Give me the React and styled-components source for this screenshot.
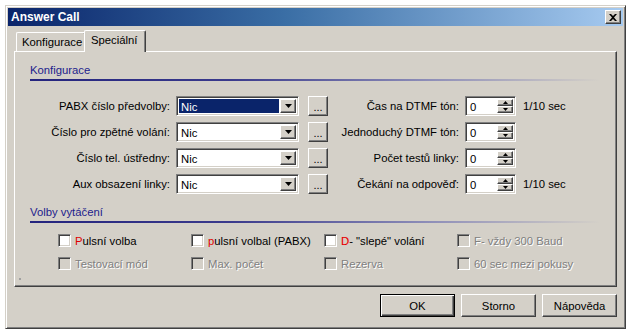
import React from "react";
import styled, { createGlobalStyle, css } from "styled-components";

const GlobalStyle = createGlobalStyle`
  body {
    margin: 0;
    background: #ffffff;
    font-family: "Liberation Sans", Arial, sans-serif;
    font-size: 11.3px;
    color: #000;
  }
`;

const sunken = css`
  border: 1px solid;
  border-color: #808080 #ffffff #ffffff #808080;
  box-shadow: inset 1px 1px #404040, inset -1px -1px #d4d0c8;
`;

const raised = css`
  border: 1px solid;
  border-color: #ffffff #404040 #404040 #ffffff;
  box-shadow: inset -1px -1px #808080, inset 1px 1px #d4d0c8;
`;

const Page = styled.div`
  padding: 5px 0 0 5px;
`;

const Window = styled.div`
  box-sizing: border-box;
  width: 621px;
  height: 324px;
  background: #d4d0c8;
  border: 1px solid;
  border-color: #d4d0c8 #404040 #404040 #d4d0c8;
  box-shadow: inset 1px 1px #ffffff, inset -1px -1px #808080;
  padding: 2px 2px 0 2px;
  display: flex;
  flex-direction: column;
`;

const TitleBar = styled.div`
  height: 18px;
  display: flex;
  align-items: center;
  justify-content: space-between;
  background: linear-gradient(to right, #0a246a 0%, #3a6ea5 45%, #a6caf0 100%);
  padding: 0 2px 0 3px;
`;

const Title = styled.span`
  color: #fff;
  font-weight: bold;
  font-size: 12px;
`;

const CloseButton = styled.div`
  ${raised};
  box-sizing: border-box;
  width: 16px;
  height: 14px;
  background: #d4d0c8;
  display: flex;
  align-items: center;
  justify-content: center;
`;

const Body = styled.div`
  flex: 1;
  padding: 4px 6px 0 6px;
  display: flex;
  flex-direction: column;
`;

const TabRow = styled.div`
  display: flex;
  align-items: flex-end;
  height: 21px;
  padding-left: 2px;
  position: relative;
  z-index: 1;
`;

const Tab = styled.div`
  box-sizing: border-box;
  height: ${(p) => (p.$active ? "22px" : "19px")};
  width: ${(p) => p.$w}px;
  margin-left: ${(p) => (p.$active ? "-2px" : "0")};
  padding: ${(p) => (p.$active ? "3px 0 0 6px" : "3px 0 0 5px")};
  background: #d4d0c8;
  border-top: 1px solid #ffffff;
  border-left: 1px solid #ffffff;
  border-right: 1px solid #404040;
  box-shadow: inset -1px 0 #808080;
  border-radius: 2px 2px 0 0;
  margin-bottom: ${(p) => (p.$active ? "-1px" : "0")};
  white-space: nowrap;
`;

const Panel = styled.div`
  box-sizing: border-box;
  height: 236px;
  border: 1px solid;
  border-color: #ffffff #404040 #404040 #ffffff;
  box-shadow: inset -1px -1px #808080;
  padding: 12px 16px 0 13px;
  position: relative;
`;

const SectionTitle = styled.div`
  color: #1c1c8c;
  line-height: 13px;
  padding-left: 2px;
  margin-top: ${(p) => p.$top}px;

  &::after {
    content: "";
    display: block;
    height: 2px;
    margin-top: 2px;
    width: 570px;
    background: linear-gradient(
      to right,
      #24247e 0%,
      #3a3a8c 35%,
      #8e8eb8 70%,
      rgba(212, 208, 200, 0) 100%
    );
  }
`;

const FieldsGrid = styled.div`
  margin-top: 15px;
  display: grid;
  grid-template-columns: 145px 126px 29px 137px 51px auto;
  row-gap: 6px;
  align-items: center;
`;

const Label = styled.div`
  text-align: right;
  padding-right: ${(p) => p.$pr || 3}px;
  white-space: nowrap;
`;

const Combo = styled.div`
  ${sunken};
  box-sizing: border-box;
  height: 20px;
  background: #fff;
  display: flex;
  align-items: stretch;
  padding: 2px;
  margin-left: 3px;
`;

const ComboText = styled.div`
  flex: 1;
  padding-left: 2px;
  line-height: 16px;
  background: ${(p) => (p.$selected ? "#0a246a" : "transparent")};
  color: ${(p) => (p.$selected ? "#fff" : "#000")};
  margin-right: 1px;
`;

const ArrowButton = styled.div`
  ${raised};
  box-sizing: border-box;
  width: 16px;
  background: #d4d0c8;
  display: flex;
  align-items: center;
  justify-content: center;
`;

const DotsButton = styled.div`
  ${raised};
  box-sizing: border-box;
  width: 20px;
  height: 20px;
  margin-left: 9px;
  background: #d4d0c8;
  font-size: 11px;
  display: flex;
  align-items: flex-end;
  justify-content: center;
  padding-bottom: 3px;
  line-height: 10px;
`;

const Spin = styled.div`
  ${sunken};
  box-sizing: border-box;
  height: 20px;
  background: #fff;
  display: flex;
  padding: 2px;
`;

const SpinText = styled.div`
  flex: 1;
  padding-left: 2px;
  line-height: 16px;
`;

const SpinButtons = styled.div`
  width: 16px;
  display: flex;
  flex-direction: column;
`;

const SpinButton = styled.div`
  ${raised};
  box-sizing: border-box;
  flex: 1;
  background: #d4d0c8;
  display: flex;
  align-items: center;
  justify-content: center;
`;

const Unit = styled.div`
  padding-left: 7px;
  white-space: nowrap;
`;

const CheckGrid = styled.div`
  margin-top: 10px;
  padding-left: 30px;
  display: grid;
  grid-template-columns: repeat(4, 133px);
  row-gap: 8px;
`;

const CheckItem = styled.div`
  display: flex;
  align-items: center;
  height: 15px;
  white-space: nowrap;
  color: ${(p) => (p.$disabled ? "#808080" : "#000")};
  text-shadow: ${(p) => (p.$disabled ? "1px 1px #ffffff" : "none")};
`;

const Box = styled.div`
  ${sunken};
  box-sizing: border-box;
  width: 13px;
  height: 13px;
  margin-right: 4px;
  background: ${(p) => (p.$disabled ? "#d4d0c8" : "#ffffff")};
`;

const Accent = styled.span`
  color: #e00000;
  text-shadow: ${(p) => (p.$soft ? "0 0 1px #ff9090" : "none")};
`;

const Grip = styled.div`
  position: absolute;
  left: 4px;
  bottom: 6px;
  width: 2px;
  height: 2px;
  background: #a0a0a0;
`;

const ButtonRow = styled.div`
  display: flex;
  justify-content: flex-end;
  gap: 6px;
  margin-top: 7px;
`;

const Button = styled.div`
  box-sizing: border-box;
  width: 75px;
  height: 23px;
  background: #d4d0c8;
  display: flex;
  align-items: center;
  justify-content: center;
  ${(p) =>
    p.$default
      ? css`
          border: 1px solid #000;
          box-shadow: inset 1px 1px #ffffff, inset -1px -1px #404040,
            inset -2px -2px #808080;
        `
      : raised}
`;

const DownArrow = () => (
  <svg width="7" height="4" viewBox="0 0 7 4">
    <path d="M0 0h7L3.5 4z" fill="#000" />
  </svg>
);

const TinyArrow = ({ up }) => (
  <svg width="5" height="3" viewBox="0 0 5 3">
    <path d={up ? "M2.5 0L5 3H0z" : "M0 0h5L2.5 3z"} fill="#000" />
  </svg>
);

const CloseGlyph = () => (
  <svg width="8" height="7" viewBox="0 0 8 7">
    <path d="M0 0h2l2 2 2-2h2L5 3.5 8 7H6L4 5 2 7H0l3-3.5z" fill="#000" />
  </svg>
);

const rows = [
  { left: "PABX číslo předvolby:", right: "Čas na DTMF tón:", unit: "1/10 sec", selected: true },
  { left: "Číslo pro zpětné volání:", right: "Jednoduchý DTMF tón:" },
  { left: "Číslo tel. ústředny:", right: "Počet testů linky:" },
  { left: "Aux obsazení linky:", right: "Čekání na odpověď:", unit: "1/10 sec" },
];

const checks = [
  { label: <><Accent>P</Accent>ulsní volba</> },
  { label: <><Accent>p</Accent>ulsní volbal (PABX)</> },
  { label: <><Accent $soft>D</Accent>- "slepé" volání</> },
  { label: "F- vždy 300 Baud", disabled: true },
  { label: "Testovací mód", disabled: true },
  { label: "Max. počet", disabled: true },
  { label: "Rezerva", disabled: true },
  { label: "60 sec mezi pokusy", disabled: true },
];

export default function App() {
  return (
    <Page>
      <GlobalStyle />
      <Window>
        <TitleBar>
          <Title>Answer Call</Title>
          <CloseButton>
            <CloseGlyph />
          </CloseButton>
        </TitleBar>
        <Body>
          <TabRow>
            <Tab $w={70}>Konfigurace</Tab>
            <Tab $w={62} $active>
              Speciální
            </Tab>
          </TabRow>
          <Panel>
            <SectionTitle $top={0}>Konfigurace</SectionTitle>
            <FieldsGrid>
              {rows.map((r) => (
                <React.Fragment key={r.left}>
                  <Label>{r.left}</Label>
                  <Combo>
                    <ComboText $selected={r.selected}>Nic</ComboText>
                    <ArrowButton>
                      <DownArrow />
                    </ArrowButton>
                  </Combo>
                  <DotsButton>...</DotsButton>
                  <Label $pr={6}>{r.right}</Label>
                  <Spin>
                    <SpinText>0</SpinText>
                    <SpinButtons>
                      <SpinButton>
                        <TinyArrow up />
                      </SpinButton>
                      <SpinButton>
                        <TinyArrow />
                      </SpinButton>
                    </SpinButtons>
                  </Spin>
                  <Unit>{r.unit || ""}</Unit>
                </React.Fragment>
              ))}
            </FieldsGrid>
            <SectionTitle $top={12}>Volby vytáčení</SectionTitle>
            <CheckGrid>
              {checks.map((c, i) => (
                <CheckItem key={i} $disabled={c.disabled}>
                  <Box $disabled={c.disabled} />
                  {c.label}
                </CheckItem>
              ))}
            </CheckGrid>
            <Grip />
          </Panel>
          <ButtonRow>
            <Button $default>OK</Button>
            <Button>Storno</Button>
            <Button>Nápověda</Button>
          </ButtonRow>
        </Body>
      </Window>
    </Page>
  );
}
